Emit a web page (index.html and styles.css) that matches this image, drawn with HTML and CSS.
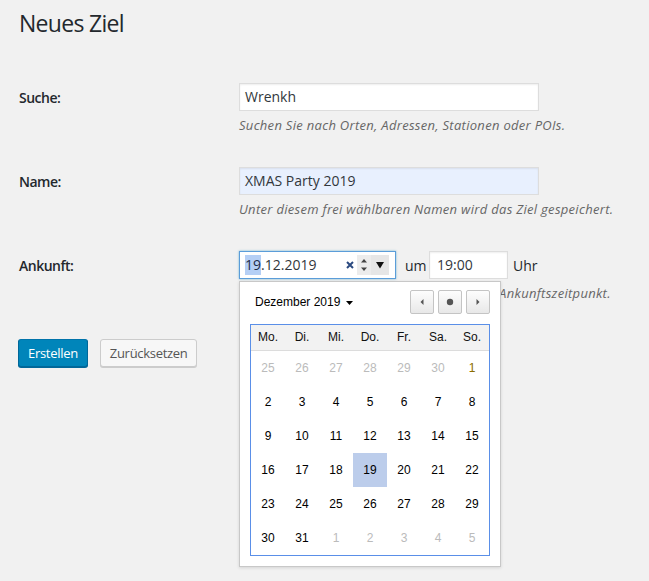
FILE: index.html
```html
<!DOCTYPE html>
<html lang="de">
<head>
<meta charset="utf-8">
<title>Neues Ziel</title>
<link rel="stylesheet" href="styles.css">
</head>
<body>
<div class="wrap">
  <h1 class="title">Neues Ziel</h1>
  <div class="form">
    <div class="row">
      <div class="label">Suche:</div>
      <div class="field">
        <div class="input">Wrenkh</div>
        <p class="desc">Suchen Sie nach Orten, Adressen, Stationen oder POIs.</p>
      </div>
    </div>
    <div class="row">
      <div class="label">Name:</div>
      <div class="field">
        <div class="input autofill">XMAS Party 2019</div>
        <p class="desc">Unter diesem frei wählbaren Namen wird das Ziel gespeichert.</p>
      </div>
    </div>
    <div class="row">
      <div class="label">Ankunft:</div>
      <div class="field">
        <div class="inline">
          <div class="datewrap">
            <div class="input date">
              <span class="seg sel">19</span><span class="seg">.12.2019</span>
              <span class="clear"><svg width="8" height="8" viewBox="0 0 8 8"><path d="M1 1L7 7M7 1L1 7" stroke="#2b4a80" stroke-width="2"/></svg></span>
              <span class="spin"><svg width="8" height="14" viewBox="0 0 8 14"><path d="M1 4.5L4 1L7 4.5Z" fill="#444"/><path d="M1 9.5L4 13L7 9.5Z" fill="#444"/></svg></span>
              <span class="drop"><svg width="10" height="8" viewBox="0 0 10 8"><path d="M1 1H9L5 7.5Z" fill="#111"/></svg></span>
            </div>
            <div class="popup">
              <div class="cal-head">
                <div class="month">Dezember 2019 <svg class="caret" width="7" height="4" viewBox="0 0 7 4"><path d="M0 0H7L3.5 4Z" fill="#000"/></svg></div>
                <div class="nav">
                  <span class="navbtn"><svg width="6" height="8" viewBox="0 0 6 8"><path d="M4.5 1V7L1.5 4Z" fill="#555"/></svg></span>
                  <span class="navbtn"><svg width="8" height="8" viewBox="0 0 8 8"><circle cx="4" cy="4" r="3.2" fill="#555"/></svg></span>
                  <span class="navbtn"><svg width="6" height="8" viewBox="0 0 6 8"><path d="M1.5 1V7L4.5 4Z" fill="#555"/></svg></span>
                </div>
              </div>
              <div class="cal">
                <div class="dow">Mo.</div><div class="dow">Di.</div><div class="dow">Mi.</div><div class="dow">Do.</div><div class="dow">Fr.</div><div class="dow">Sa.</div><div class="dow">So.</div>
                <div class="d out">25</div><div class="d out">26</div><div class="d out">27</div><div class="d out">28</div><div class="d out">29</div><div class="d out">30</div><div class="d first">1</div>
                <div class="d">2</div><div class="d">3</div><div class="d">4</div><div class="d">5</div><div class="d">6</div><div class="d">7</div><div class="d">8</div>
                <div class="d">9</div><div class="d">10</div><div class="d">11</div><div class="d">12</div><div class="d">13</div><div class="d">14</div><div class="d">15</div>
                <div class="d">16</div><div class="d">17</div><div class="d">18</div><div class="d selday">19</div><div class="d">20</div><div class="d">21</div><div class="d">22</div>
                <div class="d">23</div><div class="d">24</div><div class="d">25</div><div class="d">26</div><div class="d">27</div><div class="d">28</div><div class="d">29</div>
                <div class="d">30</div><div class="d">31</div><div class="d out">1</div><div class="d out">2</div><div class="d out">3</div><div class="d out">4</div><div class="d out">5</div>
              </div>
            </div>
          </div>
          <span class="word um">um</span>
          <div class="input time">19:00</div>
          <span class="word uhr">Uhr</span>
        </div>
        <p class="desc">Wählen Sie einen Tag für den gewünschten Ankunftszeitpunkt.</p>
      </div>
    </div>
  </div>
  <div class="actions">
    <button class="btn primary">Erstellen</button>
    <button class="btn secondary">Zurücksetzen</button>
  </div>
</div>
</body>
</html>
```
FILE: styles.css
```css
html, body {
  margin: 0;
  padding: 0;
}
body {
  min-height: 100vh;
  background: #f1f1f1;
  font-family: "Open Sans", "Noto Sans", sans-serif;
  color: #23282d;
  font-size: 13px;
}
.wrap {
  padding: 0 19px;
}
.title {
  margin: 0;
  padding: 9px 0 0;
  font-size: 23px;
  font-weight: 400;
  line-height: 29px;
  letter-spacing: -0.7px;
  color: #23282d;
}
.form {
  margin-top: 45px;
}
.row {
  display: flex;
  height: 84px;
}
.label {
  width: 220px;
  flex: none;
  font-size: 14px;
  font-weight: 600;
  line-height: 28px;
  letter-spacing: -0.5px;
  padding-top: 1px;
}
.field {
  flex: 1;
}
.input {
  box-sizing: border-box;
  height: 28px;
  width: 300px;
  border: 1px solid #ddd;
  box-shadow: inset 0 1px 2px rgba(0,0,0,.07);
  background: #fff;
  color: #32373c;
  font-size: 14px;
  line-height: 26px;
  padding: 0 5px;
  white-space: nowrap;
}
.autofill {
  background: #e8f0fe;
}
.desc {
  margin: 5px 0 0;
  font-size: 13px;
  font-style: italic;
  line-height: 19px;
  letter-spacing: 0.3px;
  color: #666;
  white-space: nowrap;
}
.inline {
  display: flex;
  align-items: center;
}
.datewrap {
  position: relative;
}
.date {
  width: 157px;
  border-color: #5b9dd9;
  box-shadow: 0 0 2px rgba(30,140,190,.6);
  display: flex;
  align-items: center;
  padding: 0 6px 0 5px;
}
.seg {
  line-height: 20px;
}
.sel {
  background: #b5cff5;
  color: #1d2d4a;
}
.clear {
  margin-left: auto;
  display: flex;
  width: 8px;
  height: 8px;
}
.spin {
  margin-left: 3px;
  display: flex;
  align-items: center;
  justify-content: center;
  width: 14px;
  height: 20px;
  background: #ececec;
}
.drop {
  display: flex;
  align-items: center;
  justify-content: center;
  width: 18px;
  height: 20px;
  background: #e6e6e6;
}
.word {
  font-size: 14px;
}
.um {
  width: 24px;
  margin-left: 9px;
}
.uhr {
  margin-left: 5px;
}
.time {
  width: 79px;
  padding-left: 7px;
}
.popup {
  position: absolute;
  top: 30px;
  left: 0;
  z-index: 5;
  box-sizing: border-box;
  width: 262px;
  background: #fff;
  border: 1px solid #c8c8c8;
  box-shadow: 0 1px 3px rgba(0,0,0,.12);
  padding: 8px 10px 10px;
  font-family: "Liberation Sans", Arial, sans-serif;
  font-size: 12px;
  color: #000;
}
.cal-head {
  display: flex;
  align-items: center;
  justify-content: space-between;
  height: 24px;
  margin-bottom: 10px;
}
.month {
  margin-left: 5px;
  display: flex;
  align-items: center;
  gap: 6px;
}
.caret {
  margin-top: 1px;
}
.nav {
  display: flex;
  gap: 4px;
}
.navbtn {
  box-sizing: border-box;
  width: 24px;
  height: 24px;
  border: 1px solid #c4c4c4;
  border-radius: 2px;
  background: linear-gradient(#fdfdfd, #e8e8e8);
  display: flex;
  align-items: center;
  justify-content: center;
}
.cal {
  display: grid;
  grid-template-columns: repeat(7, 34px);
  grid-template-rows: 26px repeat(6, 34px);
  border: 1px solid #5a8fe8;
}
.dow {
  box-sizing: border-box;
  height: 26px;
  line-height: 25px;
  background: #f2f2f2;
  border-bottom: 1px solid #dcdcdc;
  text-align: center;
  color: #111;
}
.d {
  display: flex;
  align-items: center;
  justify-content: center;
}
.out {
  color: #bbb;
}
.first {
  color: #8c6d00;
}
.selday {
  background: #bccdeb;
}
.actions {
  display: flex;
  gap: 12px;
  margin-top: 4px;
  margin-left: -1px;
}
.btn {
  box-sizing: border-box;
  height: 28px;
  font-family: "Open Sans", "Noto Sans", sans-serif;
  font-size: 13px;
  line-height: 26px;
  letter-spacing: -0.3px;
  padding: 0 9px;
  border-radius: 3px;
  border: 1px solid;
  cursor: pointer;
}
.primary {
  background: #0085ba;
  border-color: #0073aa #006799 #006799;
  box-shadow: 0 1px 0 #006799;
  color: #fff;
}
.secondary {
  background: #f7f7f7;
  border-color: #ccc;
  box-shadow: 0 1px 0 #ccc;
  color: #555;
}
```
